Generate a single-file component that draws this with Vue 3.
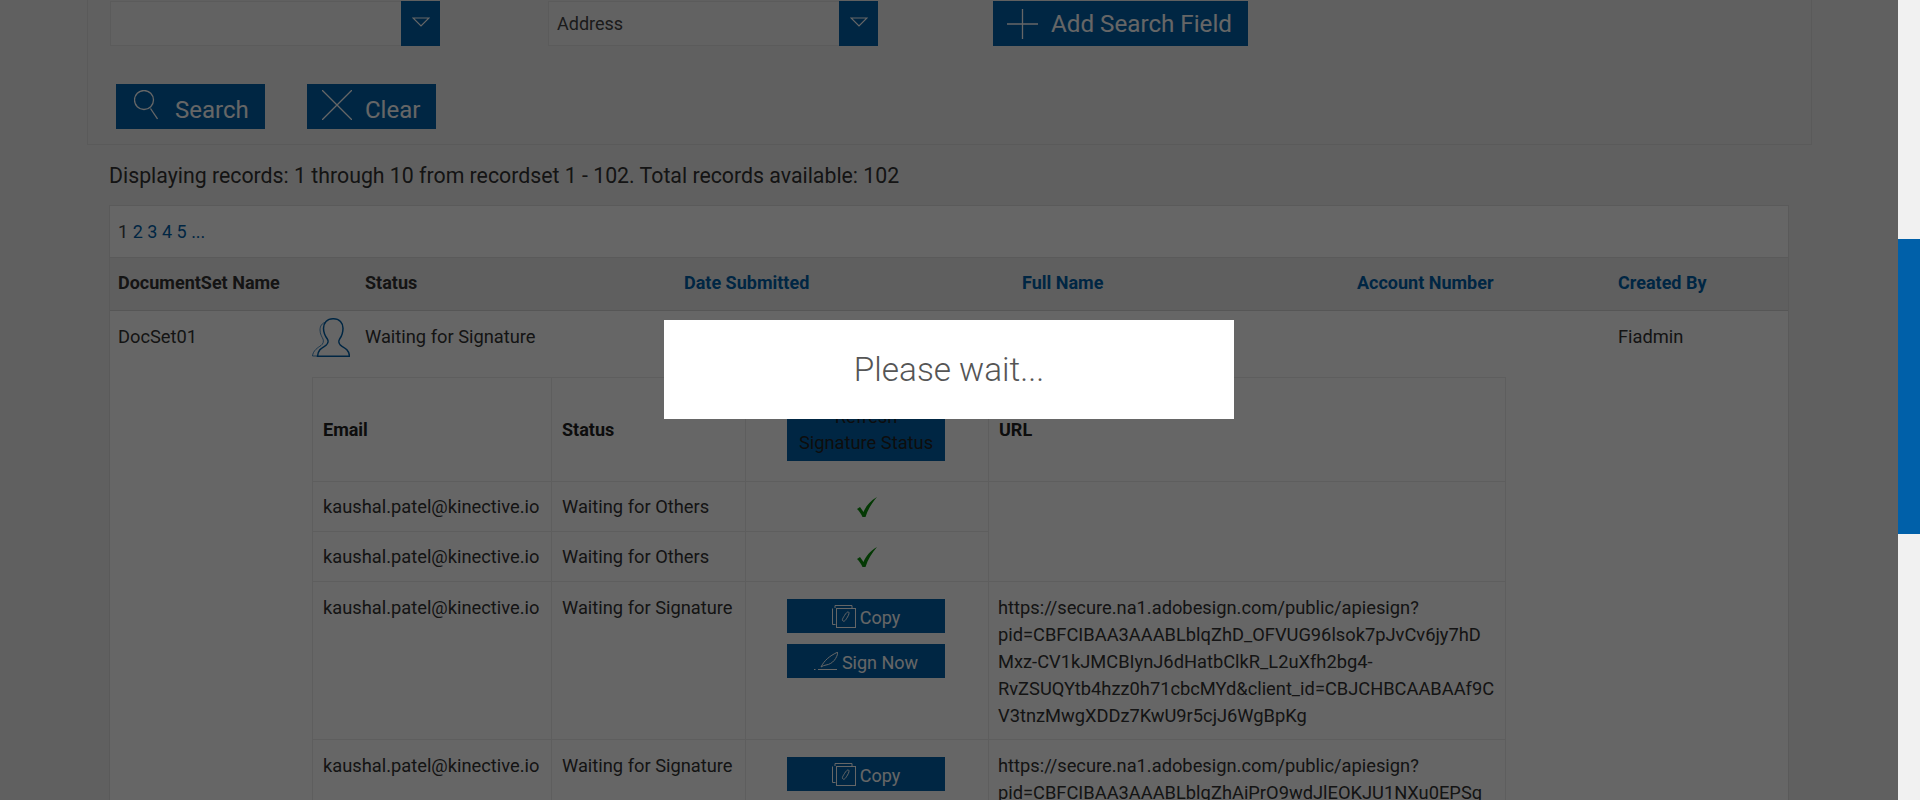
<script setup>
const columns = [
  { label: 'DocumentSet Name' },
  { label: 'Status', cls: 'th-status' },
  { label: 'Date Submitted', link: true },
  { label: 'Full Name', link: true },
  { label: 'Account Number', link: true },
  { label: 'Created By', link: true }
]

const pages = ['2', '3', '4', '5', '...']
const email = 'kaushal.patel@kinective.io'

const firstUrl = [
  'https://secure.na1.adobesign.com/public/apiesign?',
  'pid=CBFCIBAA3AAABLblqZhD_OFVUG96lsok7pJvCv6jy7hD',
  'Mxz-CV1kJMCBIynJ6dHatbClkR_L2uXfh2bg4-',
  'RvZSUQYtb4hzz0h71cbcMYd&client_id=CBJCHBCAABAAf9C',
  'V3tnzMwgXDDz7KwU9r5cjJ6WgBpKg'
]
const secondUrl = [
  'https://secure.na1.adobesign.com/public/apiesign?',
  'pid=CBFCIBAA3AAABLblqZhAiPrO9wdJlEOKJU1NXu0EPSg'
]
</script>

<template>
  <div class="screen">
    <div class="page">
      <section class="panel">
        <div class="field-row">
          <div class="select">
            <span class="select-value"></span>
            <span class="select-arrow">
              <svg width="18" height="10" viewBox="0 0 18 10"><path d="M1 1h16L9 9z" fill="none" stroke="#fff" stroke-width="1.2" /></svg>
            </span>
          </div>
          <div class="select select-address">
            <span class="select-value">Address</span>
            <span class="select-arrow">
              <svg width="18" height="10" viewBox="0 0 18 10"><path d="M1 1h16L9 9z" fill="none" stroke="#fff" stroke-width="1.2" /></svg>
            </span>
          </div>
          <button class="btn btn-add">
            <svg width="31" height="30" viewBox="0 0 31 30"><path d="M0 15h31M15.500 0v30" stroke="#fff" stroke-width="1.300" fill="none" /></svg>
            <span>Add Search Field</span>
          </button>
        </div>
        <div class="action-row">
          <button class="btn btn-search">
            <svg width="24" height="30" viewBox="0 0 24 30"><circle cx="10" cy="10" r="9.500" fill="none" stroke="#fff" stroke-width="1.300" /><path d="M16.500 18.500L23.500 29" stroke="#fff" stroke-width="1.300" /></svg>
            <span>Search</span>
          </button>
          <button class="btn btn-clear">
            <svg width="30" height="30" viewBox="0 0 30 30"><path d="M0 0l30 30M30 0L0 30" stroke="#fff" stroke-width="1.300" /></svg>
            <span>Clear</span>
          </button>
        </div>
      </section>

      <p class="summary">Displaying records: 1 through 10 from recordset 1 - 102. Total records available: 102</p>

      <div class="records">
        <div class="pager">
          <span>1</span>
          <a v-for="p in pages" :key="p">{{ p }}</a>
        </div>
        <table class="outer">
          <colgroup>
            <col class="c-name" /><col class="c-status" /><col class="c-date" /><col class="c-full" /><col class="c-account" /><col />
          </colgroup>
          <thead>
            <tr>
              <th v-for="c in columns" :key="c.label" :class="[c.cls, { 'th-link': c.link }]">{{ c.label }}</th>
            </tr>
          </thead>
          <tbody>
            <tr>
              <td>DocSet01</td>
              <td colspan="4" class="detail">
                <div class="status-line">
                  <svg class="person" width="38" height="39" viewBox="0 0 38 39" fill="none">
                    <path d="M14 4c-4 1-6 4-6 8 0 4 2 7 3 9 1 2.500 0 5-2 6.500-3 2-8 5-8.500 10.500h5" stroke="#0060a9" stroke-width="1" opacity=".7" />
                    <path d="M21 .8c-6 0-9.500 4-9.500 9.500 0 5 2.500 9 4 11 1.500 2.500-.5 5.500-3 7-3.500 2-6.500 4-7 10h32c-.5-6-4-8-7.500-10-2.500-1.500-4-4.500-2.500-7 1.500-2 3.500-6 3.500-11 0-5.500-3.500-9.500-9.500-9.500z" stroke="#0060a9" stroke-width="1.500" />
                  </svg>
                  <span>Waiting for Signature</span>
                </div>
                <table class="inner">
                  <colgroup>
                    <col class="i-email" /><col class="i-status" /><col class="i-action" /><col />
                  </colgroup>
                  <tbody>
                    <tr class="head-row">
                      <th>Email</th>
                      <th>Status</th>
                      <th class="center"><button class="btn-refresh">Refresh<br />Signature Status</button></th>
                      <th>URL</th>
                    </tr>
                    <tr>
                      <td>{{ email }}</td>
                      <td>Waiting for Others</td>
                      <td class="center">
                        <svg class="tick" width="20" height="20" viewBox="0 0 20 20"><path d="M0 12l3-2 3.500 5C9 9 13 4 20 0c-5 6-9 12-11.500 20h-3C4 16.500 2 14 0 12z" fill="#0a8f0a" /></svg>
                      </td>
                      <td rowspan="2"></td>
                    </tr>
                    <tr>
                      <td>{{ email }}</td>
                      <td>Waiting for Others</td>
                      <td class="center">
                        <svg class="tick" width="20" height="20" viewBox="0 0 20 20"><path d="M0 12l3-2 3.500 5C9 9 13 4 20 0c-5 6-9 12-11.500 20h-3C4 16.500 2 14 0 12z" fill="#0a8f0a" /></svg>
                      </td>
                    </tr>
                    <tr class="tall">
                      <td>{{ email }}</td>
                      <td>Waiting for Signature</td>
                      <td class="center">
                        <button class="btn-small">
                          <svg width="24" height="23" viewBox="0 0 24 23" fill="none" stroke="#fff" stroke-width="1"><path d="M3.500 19.500H.5V3.500M3 3V.5h17v3" /><rect x="4.500" y="3.500" width="19" height="19" /><path d="M11 16c-1.500-1 0-3 1.500-5.500s3-4 4-3.500 .5 2.500-1 5-3 5-4.500 4z" /></svg>
                          <span>Copy</span>
                        </button>
                        <button class="btn-small">
                          <svg width="24" height="18" viewBox="0 0 24 18" fill="none" stroke="#fff" stroke-width="1"><path d="M0 17.500h1.500M4 17.500h19M7 15c3-6 8-11 17-15-1 6-5 12-12 13-2 .3-3.500 1-5 2z" /></svg>
                          <span>Sign Now</span>
                        </button>
                      </td>
                      <td class="url"><div v-for="line in firstUrl" :key="line">{{ line }}</div></td>
                    </tr>
                    <tr class="tall">
                      <td>{{ email }}</td>
                      <td>Waiting for Signature</td>
                      <td class="center">
                        <button class="btn-small">
                          <svg width="24" height="23" viewBox="0 0 24 23" fill="none" stroke="#fff" stroke-width="1"><path d="M3.500 19.500H.5V3.500M3 3V.5h17v3" /><rect x="4.500" y="3.500" width="19" height="19" /><path d="M11 16c-1.500-1 0-3 1.500-5.500s3-4 4-3.500 .5 2.500-1 5-3 5-4.500 4z" /></svg>
                          <span>Copy</span>
                        </button>
                      </td>
                      <td class="url"><div v-for="line in secondUrl" :key="line">{{ line }}</div></td>
                    </tr>
                  </tbody>
                </table>
              </td>
              <td>Fiadmin</td>
            </tr>
          </tbody>
        </table>
      </div>

      <div class="overlay">
        <div class="wait-box">Please wait...</div>
      </div>
    </div>

    <div class="scrollbar">
      <div class="scroll-thumb"></div>
    </div>
  </div>
</template>

<style scoped>
.screen {
  display: flex;
  height: 800px;
  overflow: hidden;
  font-family: Roboto, "Liberation Sans", sans-serif;
  color: #555;
  background: #f1f1f1;
}

.page {
  position: relative;
  flex: 1;
  min-width: 0;
  overflow: hidden;
  background: #f1f1f1;
}

.scrollbar {
  width: 22px;
  padding-top: 239px;
  background: #f1f1f1;
}

.scroll-thumb {
  height: 295px;
  background: #0060a9;
}

.panel {
  width: 1725px;
  box-sizing: border-box;
  height: 145px;
  margin-left: 87px;
  padding: 1px 0 0 22px;
  border: 1px solid #e0e0e0;
  border-top: 0;
}

.field-row {
  display: flex;
}

.select {
  display: flex;
  width: 330px;
  height: 45px;
  box-sizing: border-box;
  margin-right: 108px;
  border: 1px solid #e4e4e4;
  background: #f5f5f5;
}

.select-address {
  margin-right: 115px;
}

.select-value {
  flex: 1;
  padding-left: 8px;
  font-size: 18px;
  line-height: 43px;
  color: #444;
}

.select-arrow {
  display: flex;
  align-items: center;
  justify-content: center;
  width: 39px;
  margin: -1px -1px -1px 0;
  padding-bottom: 3px;
  box-sizing: border-box;
  background: #0060a9;
}

.btn {
  display: flex;
  height: 45px;
  padding: 0;
  border: 0;
  background: #0060a9;
  color: #fff;
  font-family: inherit;
  font-size: 24px;
  line-height: 50px;
}

.btn-add {
  width: 255px;
  padding-left: 14px;
  gap: 13px;
  align-items: center;
  font-size: 24.200px;
}

.action-row {
  display: flex;
  gap: 42px;
  margin: 38px 0 0 6px;
}

.btn-search {
  width: 149px;
  padding: 6px 0 0 18px;
  gap: 17px;
  line-height: 40px;
}

.btn-clear {
  width: 129px;
  padding: 6px 0 0 15px;
  gap: 13px;
  line-height: 40px;
}

.summary {
  margin: 0 0 0 109px;
  padding-top: 17px;
  height: 43px;
  box-sizing: content-box;
  font-size: 21.300px;
  line-height: 28px;
  color: #333;
}

.records {
  width: 1680px;
  margin-left: 109px;
  border: 1px solid #e0e0e0;
  border-bottom: 0;
  box-sizing: border-box;
  background: #fff;
}

.pager {
  display: flex;
  gap: 4.500px;
  height: 51px;
  box-sizing: border-box;
  padding: 13px 0 0 8px;
  font-size: 18px;
  line-height: 26px;
  color: #444;
}

.pager a {
  color: #0060a9;
}

.outer {
  width: 100%;
  table-layout: fixed;
  border-collapse: collapse;
  font-size: 18.300px;
}

.c-name { width: 194px; }
.c-status { width: 372px; }
.c-date { width: 338px; }
.c-full { width: 335px; }
.c-account { width: 261px; }

.outer > thead th {
  height: 48px;
  padding: 0 8px 4px;
  text-align: left;
  font-size: 18px;
  font-weight: 700;
  color: #333;
  background: #eee;
  border-top: 1px solid #e0e0e0;
  border-bottom: 1px solid #d8d8d8;
}

.outer > thead th.th-link {
  color: #0060a9;
}

.outer > thead th.th-status {
  padding-left: 61px;
}

.outer > tbody > tr > td {
  padding: 12px 8px;
  vertical-align: top;
  line-height: 27px;
  color: #333;
}

.outer > tbody > tr > td.detail {
  padding: 7px 8px 0;
}

.status-line {
  display: flex;
  align-items: flex-start;
  gap: 15px;
  height: 59px;
}

.status-line span {
  padding-top: 5px;
}

.person {
  display: block;
}

.inner {
  width: 1194px;
  table-layout: fixed;
  border-collapse: collapse;
  font-size: 18.300px;
  line-height: 27px;
}

.i-email { width: 239px; }
.i-status { width: 194px; }
.i-action { width: 243px; }

.inner th,
.inner td {
  padding: 11px 10px;
  border: 1px solid #eaeaea;
  text-align: left;
  vertical-align: top;
  color: #333;
}

.inner .tall td {
  padding-top: 12px;
  padding-bottom: 10px;
}

.inner .head-row th {
  height: 81px;
  vertical-align: middle;
  font-size: 18px;
  font-weight: 700;
  color: #222;
}

.inner th.center,
.inner td.center {
  text-align: center;
}

.inner td.url {
  padding-left: 9px;
  white-space: nowrap;
}

.btn-refresh {
  display: block;
  width: 158px;
  margin-left: 31px;
  padding: 5px 0;
  border: 0;
  background: #0060a9;
  color: #222;
  font-family: inherit;
  font-size: 18.300px;
  font-weight: 400;
  line-height: 26px;
}

.tick {
  display: block;
  margin: 4px auto 0;
}

.btn-small {
  display: flex;
  justify-content: center;
  align-items: center;
  gap: 4px;
  width: 158px;
  height: 34px;
  margin: 5px 0 11px 31px;
  padding: 0;
  border: 0;
  background: #0060a9;
  color: #fff;
  font-family: inherit;
  font-size: 18px;
  line-height: 34px;
}

.btn-small span {
  padding-top: 4px;
}

.btn-small + .btn-small {
  margin-top: 0;
}

.overlay {
  position: absolute;
  inset: 0;
  display: flex;
  justify-content: center;
  align-items: flex-start;
  padding-top: 320px;
  background: rgba(0, 0, 0, 0.6);
}

.wait-box {
  width: 570px;
  height: 99px;
  text-align: center;
  background: #fff;
  font-size: 33.300px;
  font-weight: 300;
  line-height: 100px;
  color: #555;
}
</style>
